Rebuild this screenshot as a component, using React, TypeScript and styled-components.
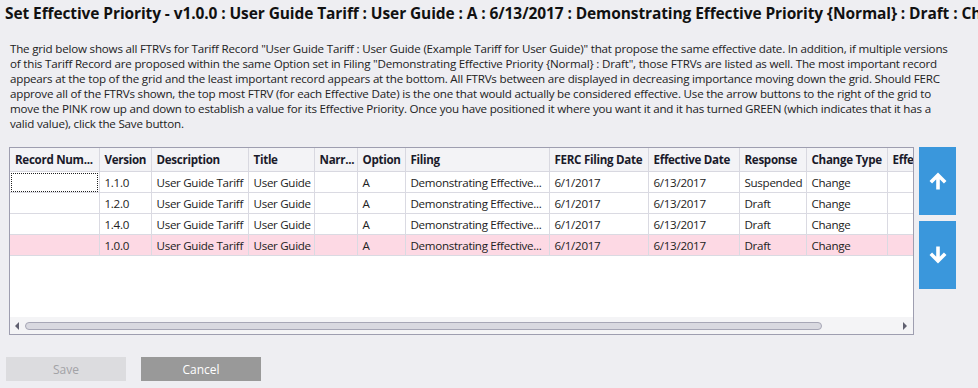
import React from 'react';
import styled, { createGlobalStyle } from 'styled-components';

const GlobalStyle = createGlobalStyle`
  html, body {
    margin: 0;
    padding: 0;
    background: #eeeef2;
  }
  body {
    font-family: "Open Sans", "Noto Sans", sans-serif;
    color: #1e1e1e;
    width: 978px;
    height: 388px;
    overflow: hidden;
  }
`;

type Row = {
  version: string,
  response: string,
  pink?: boolean,
  focused?: boolean,
};

const columns = [
  { label: 'Record Num...', width: 89 },
  { label: 'Version', width: 52 },
  { label: 'Description', width: 97 },
  { label: 'Title', width: 66 },
  { label: 'Narr...', width: 43 },
  { label: 'Option', width: 48 },
  { label: 'Filing', width: 144 },
  { label: 'FERC Filing Date', width: 99 },
  { label: 'Effective Date', width: 91 },
  { label: 'Response', width: 67 },
  { label: 'Change Type', width: 81 },
  { label: 'Effective Priority', width: 90 },
];

const tableWidth = columns.reduce((sum, c) => sum + c.width, 0);

const rows: Row[] = [
  { version: '1.1.0', response: 'Suspended', focused: true },
  { version: '1.2.0', response: 'Draft' },
  { version: '1.4.0', response: 'Draft' },
  { version: '1.0.0', response: 'Draft', pink: true },
];

const lines = [
  'The grid below shows all FTRVs for Tariff Record "User Guide Tariff : User Guide (Example Tariff for User Guide)" that propose the same effective date. In addition, if multiple versions',
  'of this Tariff Record are proposed within the same Option set in Filing "Demonstrating Effective Priority {Normal} : Draft", those FTRVs are listed as well. The most important record',
  'appears at the top of the grid and the least important record appears at the bottom. All FTRVs between are displayed in decreasing importance moving down the grid. Should FERC',
  'approve all of the FTRVs shown, the top most FTRV (for each Effective Date) is the one that would actually be considered effective. Use the arrow buttons to the right of the grid to',
  'move the PINK row up and down to establish a value for its Effective Priority. Once you have positioned it where you want it and it has turned GREEN (which indicates that it has a',
  'valid value), click the Save button.',
];

const Page = styled.div`
  display: flex;
  flex-direction: column;
  height: 388px;
`;

const Title = styled.h1`
  margin: 0;
  padding: 2px 0 0 5px;
  height: 24px;
  font-size: 15.5px;
  font-weight: 700;
  white-space: nowrap;
  overflow: hidden;
  color: #111;
  letter-spacing: -0.1px;
`;

const Intro = styled.p`
  margin: 15px 0 0 10px;
  font-size: 11.6px;
  line-height: 15px;
  color: #222;
  white-space: nowrap;
  letter-spacing: -0.2px;
`;

const GridArea = styled.div`
  display: flex;
  gap: 5px;
  margin: 16px 0 0 9px;
`;

const Grid = styled.div`
  width: 903px;
  height: 186px;
  border: 1px solid #9e9eb0;
  background: #fff;
  display: flex;
  flex-direction: column;
  overflow: hidden;
`;

const TableWrap = styled.div`
  flex: 1;
  overflow: hidden;
`;

const Table = styled.table<{ $w: number }>`
  width: ${p => p.$w}px;
  border-collapse: collapse;
  table-layout: fixed;
  font-size: 11.6px;
  letter-spacing: -0.3px;
  white-space: nowrap;
`;

const HeadCell = styled.th`
  height: 23px;
  padding: 0 0 0 5px;
  text-align: left;
  font-weight: 700;
  background: #f3f3f6;
  border-right: 1px solid #d8d8e0;
  border-bottom: 1px solid #d8d8e0;
  overflow: hidden;
  text-overflow: clip;
  color: #1a1a2a;
`;

const BodyRow = styled.tr<{ $pink?: boolean }>`
  background: ${p => (p.$pink ? '#fdd9e4' : '#fff')};
`;

const Cell = styled.td<{ $focused?: boolean }>`
  height: 20px;
  padding: 0 0 0 5px;
  border-right: 1px solid #dadae2;
  border-bottom: 1px solid #dadae2;
  overflow: hidden;
  outline: ${p => (p.$focused ? '1px dotted #222' : 'none')};
  outline-offset: -2px;
  color: #222;
`;

const ScrollBar = styled.div`
  height: 17px;
  background: #f4f4f6;
  display: flex;
  align-items: center;
  padding: 0 6px 0 5px;
  gap: 6px;
`;

const Thumb = styled.div`
  width: 795px;
  height: 6px;
  border: 1px solid #a7a7b6;
  border-radius: 4px;
  background: #d9d9e0;
`;

const ScrollArrow = styled.div<{ $dir: 'left' | 'right' }>`
  width: 0;
  height: 0;
  border-top: 4px solid transparent;
  border-bottom: 4px solid transparent;
  ${p => (p.$dir === 'left'
    ? 'border-right: 4px solid #606070;'
    : 'border-left: 4px solid #606070;')}
`;

const Spacer = styled.div`
  flex: 1;
`;

const ArrowColumn = styled.div`
  display: flex;
  flex-direction: column;
  gap: 6px;
`;

const ArrowButton = styled.button`
  width: 37px;
  height: 68px;
  border: none;
  background: #3a97dc;
  display: flex;
  align-items: center;
  justify-content: center;
  padding: 0;
`;

const ArrowIcon = styled.svg<{ $down?: boolean }>`
  width: 18px;
  height: 18px;
  flex: none;
  transform: ${p => (p.$down ? 'rotate(180deg)' : 'none')};
`;

const Footer = styled.div`
  display: flex;
  gap: 15px;
  margin: 22px 0 0 6px;
`;

const FooterButton = styled.button<{ $disabled?: boolean }>`
  width: 120px;
  height: 24px;
  border: none;
  font-family: "Open Sans", "Noto Sans", sans-serif;
  font-size: 12px;
  background: ${p => (p.$disabled ? '#dcdcdf' : '#999999')};
  color: ${p => (p.$disabled ? '#a2a2a6' : '#ffffff')};
`;

function Arrow({ down } : { down?: boolean }) {
  return (
    <ArrowIcon $down={down} viewBox="0 0 18 18">
      <path d="M9 17.5 V3 M1.8 10.2 L9 3 L16.2 10.2" fill="none" stroke="#fff" strokeWidth="3.6" strokeLinejoin="miter" />
    </ArrowIcon>
  );
}

function DataGrid() {
  return (
    <Grid>
      <TableWrap>
        <Table $w={tableWidth}>
          <colgroup>
            {columns.map(c => <col key={c.label} style={{ width: c.width }} />)}
          </colgroup>
          <thead>
            <tr>
              {columns.map(c => (
                <HeadCell key={c.label}>{c.label}</HeadCell>
              ))}
            </tr>
          </thead>
          <tbody>
            {rows.map(r => (
              <BodyRow key={r.version} $pink={r.pink}>
                <Cell $focused={r.focused} />
                <Cell>{r.version}</Cell>
                <Cell>User Guide Tariff</Cell>
                <Cell>User Guide</Cell>
                <Cell />
                <Cell>A</Cell>
                <Cell>Demonstrating Effective...</Cell>
                <Cell>6/1/2017</Cell>
                <Cell>6/13/2017</Cell>
                <Cell>{r.response}</Cell>
                <Cell>Change</Cell>
                <Cell />
              </BodyRow>
            ))}
          </tbody>
        </Table>
      </TableWrap>
      <ScrollBar>
        <ScrollArrow $dir="left" />
        <Thumb />
        <Spacer />
        <ScrollArrow $dir="right" />
      </ScrollBar>
    </Grid>
  );
}

export default function App() {
  return (
    <Page>
      <GlobalStyle />
      <Title>
        Set Effective Priority - v1.0.0 : User Guide Tariff : User Guide : A : 6/13/2017 : Demonstrating Effective Priority {'{Normal}'} : Draft : Change
      </Title>
      <Intro>
        {lines.map((l, i) => (
          <React.Fragment key={i}>
            {l}
            {i < lines.length - 1 && <br />}
          </React.Fragment>
        ))}
      </Intro>
      <GridArea>
        <DataGrid />
        <ArrowColumn>
          <ArrowButton><Arrow /></ArrowButton>
          <ArrowButton><Arrow down /></ArrowButton>
        </ArrowColumn>
      </GridArea>
      <Footer>
        <FooterButton $disabled>Save</FooterButton>
        <FooterButton>Cancel</FooterButton>
      </Footer>
    </Page>
  );
}
